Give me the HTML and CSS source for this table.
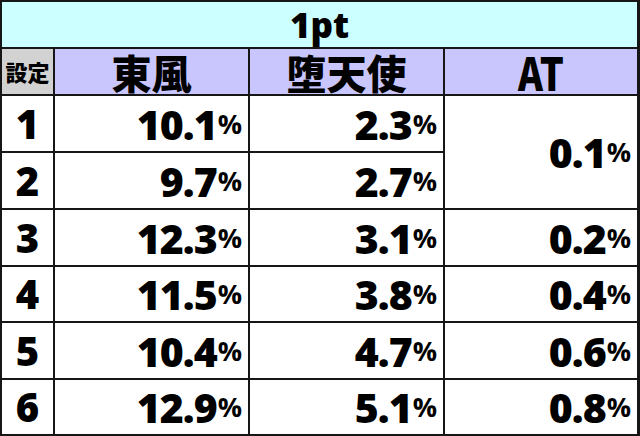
FILE: index.html
```html
<!DOCTYPE html>
<html lang="ja">
<head>
<meta charset="utf-8">
<link rel="stylesheet" href="styles.css">
</head>
<body>
<div class="table">
  <div class="cell title">1pt</div>

  <div class="cell head head-set">設定</div>
  <div class="cell head jp">東風</div>
  <div class="cell head jp">堕天使</div>
  <div class="cell head at"><span class="at-text">AT</span></div>

  <div class="cell label">1</div>
  <div class="cell val"><span class="num">10.1</span><span class="pct">%</span></div>
  <div class="cell val"><span class="num">2.3</span><span class="pct">%</span></div>
  <div class="cell val merged"><span class="num">0.1</span><span class="pct">%</span></div>

  <div class="cell label">2</div>
  <div class="cell val"><span class="num">9.7</span><span class="pct">%</span></div>
  <div class="cell val"><span class="num">2.7</span><span class="pct">%</span></div>

  <div class="cell label">3</div>
  <div class="cell val"><span class="num">12.3</span><span class="pct">%</span></div>
  <div class="cell val"><span class="num">3.1</span><span class="pct">%</span></div>
  <div class="cell val"><span class="num">0.2</span><span class="pct">%</span></div>

  <div class="cell label">4</div>
  <div class="cell val"><span class="num">11.5</span><span class="pct">%</span></div>
  <div class="cell val"><span class="num">3.8</span><span class="pct">%</span></div>
  <div class="cell val"><span class="num">0.4</span><span class="pct">%</span></div>

  <div class="cell label">5</div>
  <div class="cell val"><span class="num">10.4</span><span class="pct">%</span></div>
  <div class="cell val"><span class="num">4.7</span><span class="pct">%</span></div>
  <div class="cell val"><span class="num">0.6</span><span class="pct">%</span></div>

  <div class="cell label">6</div>
  <div class="cell val"><span class="num">12.9</span><span class="pct">%</span></div>
  <div class="cell val"><span class="num">5.1</span><span class="pct">%</span></div>
  <div class="cell val"><span class="num">0.8</span><span class="pct">%</span></div>
</div>
</body>
</html>
```

FILE: styles.css
```css
html, body {
  margin: 0;
  padding: 0;
  background: #ffffff;
}

.table {
  width: 640px;
  height: 436px;
  box-sizing: border-box;
  padding: 2px 3px 2px 2px;
  background: #161616;
  display: grid;
  grid-template-columns: 51px 193px 193px 192px;
  grid-template-rows: 45px 45px 55px 55px 55px 54px 55px 54px;
  gap: 2px;
  font-family: "Open Sans", "Noto Sans CJK JP", sans-serif;
  color: #000;
}

.cell {
  background: #ffffff;
  display: flex;
  align-items: center;
  justify-content: center;
  min-width: 0;
  min-height: 0;
}

.title {
  grid-column: 1 / 5;
  background: #ccffff;
  font-size: 35px;
  font-weight: 800;
  line-height: 45px;
}

.head {
  background: #c8c6fd;
}

.head-set {
  background: #d2d2d2;
  font-family: "Noto Sans CJK JP", sans-serif;
  font-size: 22px;
  font-weight: 900;
  line-height: 45px;
}

.jp {
  font-family: "Noto Sans CJK JP", sans-serif;
  font-size: 40px;
  font-weight: 900;
  line-height: 45px;
  padding-top: 2px;
}

.at {
  font-family: "Noto Sans CJK JP", sans-serif;
  font-size: 46px;
  font-weight: 900;
  line-height: 45px;
}

.at-text {
  display: inline-block;
  transform: scaleX(0.82);
}

.label {
  font-size: 40px;
  font-weight: 800;
  line-height: 50px;
}

.val {
  justify-content: flex-end;
  align-items: center;
  padding-right: 6px;
  line-height: 50px;
}

.merged {
  grid-row: 3 / 5;
  grid-column: 4;
}

.num {
  font-size: 41px;
  font-weight: 800;
  letter-spacing: -1px;
}

.pct {
  font-size: 27px;
  font-weight: 700;
  margin-left: 1px;
}
```
